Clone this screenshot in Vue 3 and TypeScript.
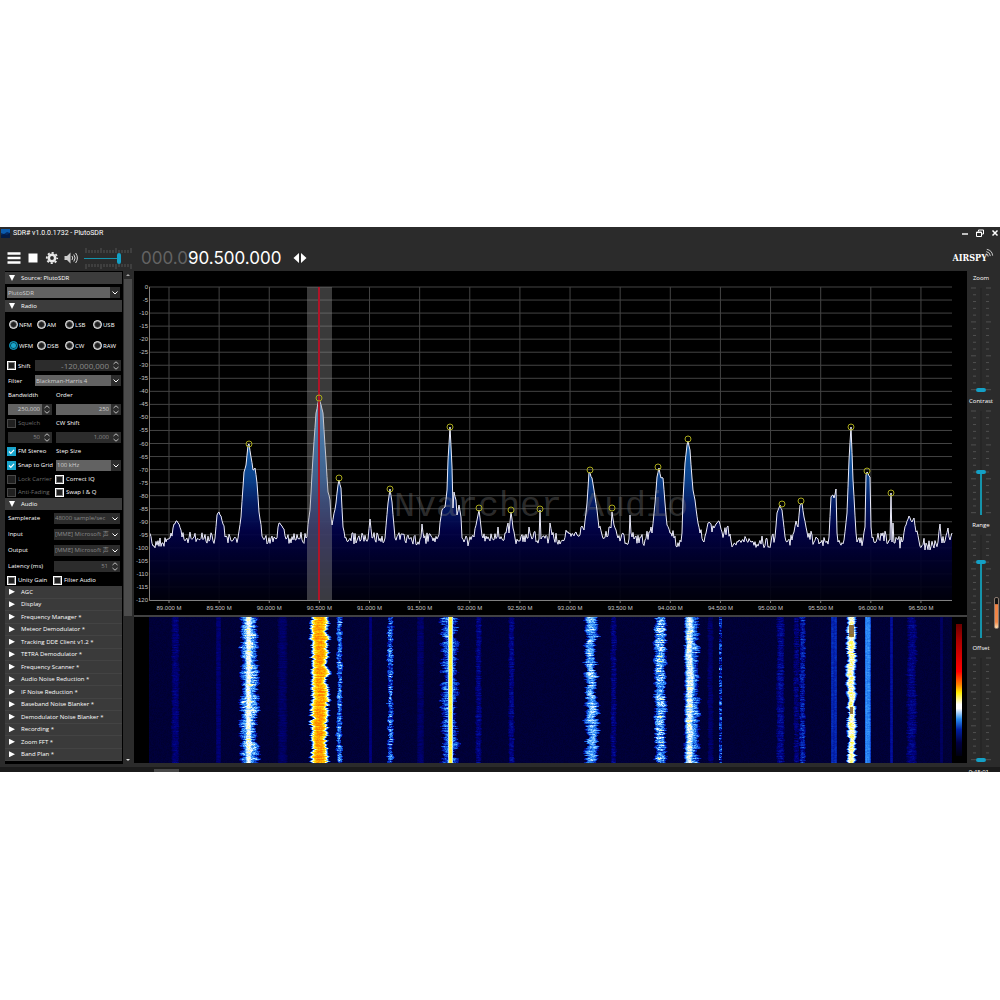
<script setup lang="ts">
import { onMounted, ref } from 'vue'

type Point = [number, number]

const modes = ['NFM', 'AM', 'LSB', 'USB', 'WFM', 'DSB', 'CW', 'RAW']
const mode = ref('WFM')

const plugins = [
  'AGC',
  'Display',
  'Frequency Manager *',
  'Meteor Demodulator *',
  'Tracking DDE Client v1.2 *',
  'TETRA Demodulator *',
  'Frequency Scanner *',
  'Audio Noise Reduction *',
  'IF Noise Reduction *',
  'Baseband Noise Blanker *',
  'Demodulator Noise Blanker *',
  'Recording *',
  'Zoom FFT *',
  'Band Plan *',
]

const sliders = ref([
  { name: 'Zoom', value: 0 },
  { name: 'Contrast', value: 40 },
  { name: 'Range', value: 73 },
  { name: 'Offset', value: 0 },
])
const volume = ref(76)

/* Small deterministic generator, so that the noise is stable between renders. */
function makeRandom(seed: number) {
  let s = seed
  return () => {
    s = (s * 1664525 + 1013904223) % 4294967296
    return s / 4294967296
  }
}

/* ---- spectrum ---- */
const plot = { left: 15, right: 818, top: 16, bottom: 329 }
const dbLines = Array.from({ length: 25 }, (_, i) => ({
  label: String(-5 * i),
  y: plot.top + ((plot.bottom - plot.top) * i) / 24,
}))
const freqLines = Array.from({ length: 16 }, (_, i) => ({
  label: (89 + i / 2).toFixed(3) + ' M',
  x: 35 + i * 50.13,
}))

const envelope: Point[] = [
  [15, 262], [19, 275], [29, 272], [36, 267], [40, 253], [43, 250], [45, 253], [48, 266], [81, 267], [83, 244],
  [85, 241], [87, 245], [89, 253], [91, 266], [104, 267], [107, 246], [110, 201], [112, 194], [114, 174], [115, 173],
  [117, 186], [119, 199], [121, 197], [123, 212], [125, 241], [129, 267], [143, 267], [145, 252], [148, 255],
  [150, 258], [153, 267], [172, 267], [176, 239], [179, 186], [182, 142], [185, 127], [189, 142], [192, 189],
  [194, 221], [196, 229], [197, 246], [198, 254], [202, 232], [204, 214], [205, 209], [207, 217], [209, 256],
  [211, 267], [234, 268], [236, 248], [238, 267], [251, 267], [254, 232], [256, 218], [258, 231], [261, 267],
  [286, 268], [288, 253], [290, 267], [304, 266], [308, 239], [311, 236], [313, 219], [314, 189], [316, 156],
  [318, 196], [319, 237], [320, 221], [322, 229], [323, 244], [325, 234], [327, 246], [328, 267], [335, 270],
  [340, 266], [343, 249], [345, 239], [347, 256], [349, 267], [363, 266], [364, 256], [365, 266], [372, 262],
  [374, 252], [375, 262], [377, 241], [379, 257], [381, 267], [394, 267], [395, 256], [397, 265], [405, 268],
  [406, 239], [407, 268], [415, 267], [416, 252], [418, 264], [425, 269], [436, 262], [443, 264], [448, 255],
  [450, 259], [453, 232], [455, 201], [458, 207], [460, 219], [463, 239], [465, 257], [468, 264], [473, 266],
  [475, 256], [477, 257], [478, 241], [480, 254], [482, 259], [484, 267], [495, 268], [496, 244], [497, 262],
  [500, 268], [511, 269], [515, 261], [518, 262], [521, 232], [523, 206], [525, 197], [527, 207], [529, 207],
  [531, 232], [533, 254], [537, 262], [540, 267], [543, 276], [548, 262], [549, 229], [551, 192], [553, 174],
  [554, 170], [556, 179], [558, 207], [559, 219], [561, 229], [564, 252], [566, 262], [569, 270], [572, 262],
  [574, 252], [577, 253], [578, 261], [580, 257], [583, 252], [585, 250], [588, 261], [590, 262], [594, 255],
  [597, 270], [637, 271], [641, 266], [643, 242], [646, 234], [648, 239], [651, 266], [653, 271], [658, 269],
  [660, 261], [662, 250], [664, 256], [666, 234], [668, 232], [670, 246], [673, 261], [678, 264], [680, 271],
  [693, 270], [695, 266], [697, 226], [699, 224], [700, 227], [702, 218], [703, 262], [704, 271], [710, 269],
  [713, 242], [715, 189], [717, 156], [719, 209], [722, 262], [723, 271], [729, 269], [731, 256], [732, 204],
  [733, 201], [736, 206], [737, 256], [739, 266], [752, 264], [754, 272], [756, 269], [757, 222], [758, 271],
  [759, 252], [760, 272], [768, 271], [772, 254], [775, 245], [778, 251], [780, 247], [782, 261], [785, 270],
  [793, 274], [804, 271], [806, 253], [808, 272], [811, 270], [814, 257], [815, 266], [818, 262],
]

function buildTrace(): string {
  const random = makeRandom(77)
  const pts: string[] = []
  for (let i = 0; i < envelope.length - 1; i++) {
    const [x0, y0] = envelope[i]
    const [x1, y1] = envelope[i + 1]
    pts.push(`${x0} ${y0}`)
    for (let x = x0 + 1; x < x1; x++) {
      const y = y0 + ((y1 - y0) * (x - x0)) / (x1 - x0)
      const spread = y > 258 ? 12 : 2
      pts.push(`${x} ${(y + (random() - 0.5) * spread).toFixed(1)}`)
    }
  }
  pts.push('818 262')
  return pts.join(' L')
}
const trace = 'M' + buildTrace()
const area = `${trace} L818 ${plot.bottom} L15 ${plot.bottom} Z`

const peaks: Point[] = [
  [115, 173], [185, 127], [205, 207], [256, 218], [316, 156], [345, 237], [377, 239], [406, 238], [456, 199],
  [478, 237], [524, 196], [554, 168], [648, 233], [667, 230], [717, 156], [733, 200], [757, 222],
]

/* ---- waterfall ---- */
interface Signal {
  x: number
  half: number
  level: number
  wobble: number
  speckle: number
}
const signals: Signal[] = [
  { x: 26, half: 4, level: 0.13, wobble: 1, speckle: 0.08 },
  { x: 69, half: 3, level: 0.12, wobble: 0, speckle: 0.05 },
  { x: 99, half: 4, level: 0.68, wobble: 1, speckle: 0.1 },
  { x: 100, half: 9, level: 0.54, wobble: 4, speckle: 0.3 },
  { x: 133, half: 5, level: 0.1, wobble: 1, speckle: 0.05 },
  { x: 170, half: 9, level: 1.02, wobble: 4, speckle: 0.16 },
  { x: 190, half: 3, level: 0.42, wobble: 2, speckle: 0.3 },
  { x: 221, half: 2, level: 0.14, wobble: 0, speckle: 0.03 },
  { x: 241, half: 3, level: 0.38, wobble: 2, speckle: 0.35 },
  { x: 271, half: 4, level: 0.1, wobble: 0, speckle: 0.05 },
  { x: 301, half: 3, level: 0.82, wobble: 0, speckle: 0.04 },
  { x: 300, half: 8, level: 0.38, wobble: 5, speckle: 0.28 },
  { x: 329, half: 3, level: 0.15, wobble: 1, speckle: 0.1 },
  { x: 362, half: 3, level: 0.16, wobble: 1, speckle: 0.1 },
  { x: 442, half: 6, level: 0.52, wobble: 5, speckle: 0.22 },
  { x: 464, half: 3, level: 0.14, wobble: 1, speckle: 0.1 },
  { x: 511, half: 6, level: 0.52, wobble: 3, speckle: 0.32 },
  { x: 540, half: 5, level: 0.66, wobble: 2, speckle: 0.14 },
  { x: 543, half: 7, level: 0.44, wobble: 4, speckle: 0.28 },
  { x: 561, half: 3, level: 0.1, wobble: 1, speckle: 0.06 },
  { x: 571, half: 2, level: 0.26, wobble: 0, speckle: 0.4 },
  { x: 631, half: 4, level: 0.17, wobble: 1, speckle: 0.12 },
  { x: 647, half: 3, level: 0.13, wobble: 1, speckle: 0.12 },
  { x: 653, half: 3, level: 0.24, wobble: 1, speckle: 0.2 },
  { x: 683, half: 2, level: 0.28, wobble: 0, speckle: 0.05 },
  { x: 686, half: 2, level: 0.28, wobble: 0, speckle: 0.05 },
  { x: 702, half: 5, level: 0.74, wobble: 3, speckle: 0.12 },
  { x: 717, half: 2, level: 0.46, wobble: 0, speckle: 0.04 },
  { x: 719, half: 3, level: 0.45, wobble: 0, speckle: 0.06 },
  { x: 742, half: 2, level: 0.2, wobble: 0, speckle: 0.03 },
  { x: 762, half: 5, level: 0.15, wobble: 2, speckle: 0.1 },
  { x: 792, half: 2, level: 0.09, wobble: 0, speckle: 0.02 },
]
const palette: [number, number[]][] = [
  [0, [0, 0, 48]],
  [0.15, [0, 0, 130]],
  [0.3, [6, 50, 190]],
  [0.45, [40, 135, 245]],
  [0.58, [140, 205, 255]],
  [0.68, [255, 255, 255]],
  [0.8, [255, 250, 70]],
  [0.92, [255, 205, 0]],
  [1.05, [255, 140, 0]],
  [1.3, [250, 60, 0]],
]

function colourOf(v: number): number[] {
  for (let i = 1; i < palette.length; i++) {
    const [p1, c1] = palette[i]
    if (v <= p1) {
      const [p0, c0] = palette[i - 1]
      const t = Math.max(0, (v - p0) / (p1 - p0))
      return c0.map((c, k) => c + (c1[k] - c) * t)
    }
  }
  return palette[palette.length - 1][1]
}

const waterfall = ref<HTMLCanvasElement | null>(null)

onMounted(() => {
  const canvas = waterfall.value
  const ctx = canvas?.getContext('2d')
  if (!canvas || !ctx) return
  const { width, height } = canvas
  const image = ctx.createImageData(width, height)
  const random = makeRandom(4242)
  const values = new Float32Array(width * height)
  for (let i = 0; i < values.length; i++) values[i] = random() * 0.025

  for (const s of signals) {
    let drift = 0
    let spread = 0
    for (let y = 0; y < height; y++) {
      drift = drift * 0.8 + (random() - 0.5) * s.wobble * 0.4
      spread = spread * 0.5 + (random() - 0.5) * s.wobble * 0.8
      const reach = s.half + spread
      const rowGain = (random() - 0.5) * s.speckle * 0.7
      let grain = 0
      for (let x = s.x - s.half - 3; x <= s.x + s.half + 3; x++) {
        grain = grain * 0.5 + (random() - 0.5) * s.speckle * 0.8
        const d = Math.abs(x - s.x - drift) / reach
        if (d >= 1 || x < 0 || x >= width) continue
        const shape = 1 - d * d * d * 0.85
        const v = s.level * shape + rowGain + grain
        const at = y * width + x
        values[at] = Math.max(values[at], v)
      }
    }
  }

  for (let i = 0; i < values.length; i++) {
    const [r, g, b] = colourOf(values[i])
    image.data[i * 4] = r
    image.data[i * 4 + 1] = g
    image.data[i * 4 + 2] = b
    image.data[i * 4 + 3] = 255
  }
  ctx.putImageData(image, 0, 0)
  ctx.fillStyle = 'rgba(110, 70, 20, 0.75)'
  ctx.fillRect(700, 8, 5, 12)
  ctx.fillRect(701, 90, 3, 7)
})

const sideTicks = Array.from({ length: 16 }, (_, i) => ({ y: 2 + i * 6.78, long: i % 5 === 0 }))
const volumeTicks = Array.from({ length: 16 }, (_, i) => ({ x: 2 + i * 3, long: i % 5 === 0 }))
</script>

<template>
  <main class="page">
    <div class="window">
      <header class="titlebar">
        <svg class="app-icon" viewBox="0 0 9 9" aria-hidden="true">
          <rect width="9" height="9" fill="#052a63" />
          <path d="M0 0h9v4l-3-1-3 2-3-1z" fill="#0b5cae" />
          <path d="M0 6l3-1 3 1 3-2v5H0z" fill="#031b45" />
        </svg>
        <span class="title">SDR# v1.0.0.1732 - PlutoSDR</span>
        <button class="win-btn" aria-label="Minimize">
          <svg viewBox="0 0 8 8"><path d="M1 5h6" stroke="#fff" stroke-width="1.4" /></svg>
        </button>
        <button class="win-btn" aria-label="Restore">
          <svg viewBox="0 0 8 8" fill="none" stroke="#fff">
            <path d="M2.5 2.5v-1.500h5v4h-1.500" />
            <path d="M.5 3h5v4.500h-5z" /><path d="M.5 3.500h5" />
          </svg>
        </button>
        <button class="win-btn" aria-label="Close">
          <svg viewBox="0 0 8 8"><path d="M1.500 1.500l5 5M6.500 1.500l-5 5" stroke="#fff" stroke-width="1.500" /></svg>
        </button>
      </header>

      <div class="toolbar">
        <button class="tool" aria-label="Menu">
          <svg viewBox="0 0 14 14"><path d="M.5 2.500h13M.5 7h13M.5 11.500h13" stroke="#fff" stroke-width="2.500" /></svg>
        </button>
        <button class="tool" aria-label="Stop">
          <svg viewBox="0 0 14 14"><path d="M2.500 2.500h9v9h-9z" fill="#fff" /></svg>
        </button>
        <button class="tool" aria-label="Settings">
          <svg viewBox="0 0 14 14">
            <circle cx="7" cy="7" r="3.200" fill="none" stroke="#e8e8e8" stroke-width="2.600" />
            <circle cx="7" cy="7" r="5.200" fill="none" stroke="#e8e8e8" stroke-width="1.800" stroke-dasharray="2.100 1.984" stroke-dashoffset="1" />
          </svg>
        </button>
        <button class="tool" aria-label="Mute">
          <svg viewBox="0 0 14 14" fill="none" stroke="#ddd">
            <path d="M.5 5h2.500l3.500-3.500v11l-3.500-3.500h-2.500z" fill="#ccc" stroke="none" />
            <path d="M8 5q1.500 2 0 4M9.800 3.500q2.600 3.500 0 7M11.600 2q3.600 5 0 10" />
          </svg>
        </button>
        <div class="volume">
          <svg viewBox="0 0 50 21" aria-hidden="true">
            <g stroke="#555" stroke-width="1">
              <template v-for="t in volumeTicks" :key="t.x">
                <path :d="t.long ? `M${t.x} 0v5` : `M${t.x} 2v3`" />
                <path :d="t.long ? `M${t.x} 16v5` : `M${t.x} 16v3`" />
              </template>
            </g>
          </svg>
          <input v-model="volume" type="range" min="0" max="100" aria-label="Volume" :style="{ '--fill': volume + '%' }" />
        </div>
        <output class="frequency" aria-label="Frequency"><span>000.0</span>90.500.000</output>
        <button class="tool step" aria-label="Tuning style">
          <svg viewBox="0 0 14 14"><path d="M6 2v10L.5 7zM8 2v10l5.500-5z" fill="#fff" /></svg>
        </button>
        <a class="brand" href="#" aria-label="Airspy">
          <span>AIRSPY</span>
          <svg viewBox="0 0 10 10" fill="none" stroke="#ddd">
            <path d="M1 6.500a3 3 0 0 1 2.500 3M1.500 4a5.500 5.500 0 0 1 4.500 5M2 1.500a8 8 0 0 1 6.500 7" />
          </svg>
        </a>
      </div>

      <div class="body">
        <aside class="panel">
          <h2 class="section"><i class="down"></i>Source: PlutoSDR</h2>
          <div class="source">
            <div class="combo">
              <select aria-label="Source"><option>PlutoSDR</option></select>
              <svg viewBox="0 0 6 4"><path d="M.5.5L3 3 5.500.5" /></svg>
            </div>
          </div>

          <h2 class="section"><i class="down"></i>Radio</h2>
          <div class="modes">
            <label v-for="m in modes" :key="m"><input v-model="mode" type="radio" name="mode" :value="m" />{{ m }}</label>
          </div>
          <div class="row head">
            <label><input type="checkbox" />Shift</label>
            <div class="spin off big">
              <input type="text" value="-120,000,000" aria-label="Shift frequency" />
              <svg viewBox="0 0 6 9"><path d="M.5 3L3 .8 5.500 3M.5 6L3 8.200 5.500 6" /></svg>
            </div>
          </div>
          <div class="row head">
            <label for="filter">Filter</label>
            <div class="combo">
              <select id="filter"><option>Blackman-Harris 4</option></select>
              <svg viewBox="0 0 6 4"><path d="M.5.5L3 3 5.500.5" /></svg>
            </div>
          </div>
          <div class="row"><label for="bw">Bandwidth</label><label for="order">Order</label></div>
          <div class="row">
            <div class="spin">
              <input id="bw" type="text" value="250,000" />
              <svg viewBox="0 0 6 9"><path d="M.5 3L3 .8 5.500 3M.5 6L3 8.200 5.500 6" /></svg>
            </div>
            <div class="spin">
              <input id="order" type="text" value="250" />
              <svg viewBox="0 0 6 9"><path d="M.5 3L3 .8 5.500 3M.5 6L3 8.200 5.500 6" /></svg>
            </div>
          </div>
          <div class="row">
            <label class="dim"><input type="checkbox" disabled />Squelch</label><label for="cw">CW Shift</label>
          </div>
          <div class="row">
            <div class="spin off">
              <input type="text" value="50" aria-label="Squelch level" />
              <svg viewBox="0 0 6 9"><path d="M.5 3L3 .8 5.500 3M.5 6L3 8.200 5.500 6" /></svg>
            </div>
            <div class="spin off">
              <input id="cw" type="text" value="1,000" />
              <svg viewBox="0 0 6 9"><path d="M.5 3L3 .8 5.500 3M.5 6L3 8.200 5.500 6" /></svg>
            </div>
          </div>
          <div class="row">
            <label><input type="checkbox" checked />FM Stereo</label><label for="stepsize">Step Size</label>
          </div>
          <div class="row">
            <label><input type="checkbox" checked />Snap to Grid</label>
            <div class="combo">
              <select id="stepsize"><option>100 kHz</option></select>
              <svg viewBox="0 0 6 4"><path d="M.5.5L3 3 5.500.5" /></svg>
            </div>
          </div>
          <div class="row">
            <label class="dim"><input type="checkbox" disabled />Lock Carrier</label>
            <label><input type="checkbox" />Correct IQ</label>
          </div>
          <div class="row tight">
            <label class="dim"><input type="checkbox" disabled />Anti-Fading</label>
            <label><input type="checkbox" />Swap I &amp; Q</label>
          </div>

          <h2 class="section"><i class="down"></i>Audio</h2>
          <div class="row audio">
            <label for="rate">Samplerate</label>
            <div class="combo off">
              <select id="rate"><option>48000 sample/sec</option></select>
              <svg viewBox="0 0 6 4"><path d="M.5.5L3 3 5.500.5" /></svg>
            </div>
          </div>
          <div class="row audio">
            <label for="in">Input</label>
            <div class="combo off">
              <select id="in"><option>[MME] Microsoft 声</option></select>
              <svg viewBox="0 0 6 4"><path d="M.5.5L3 3 5.500.5" /></svg>
            </div>
          </div>
          <div class="row audio">
            <label for="out">Output</label>
            <div class="combo off">
              <select id="out"><option>[MME] Microsoft 声</option></select>
              <svg viewBox="0 0 6 4"><path d="M.5.5L3 3 5.500.5" /></svg>
            </div>
          </div>
          <div class="row audio">
            <label for="latency">Latency (ms)</label>
            <div class="spin off">
              <input id="latency" type="text" value="51" />
              <svg viewBox="0 0 6 9"><path d="M.5 3L3 .8 5.500 3M.5 6L3 8.200 5.500 6" /></svg>
            </div>
          </div>
          <div class="row tight unity">
            <label><input type="checkbox" />Unity Gain</label>
            <label><input type="checkbox" />Filter Audio</label>
          </div>

          <ul class="plugins">
            <li v-for="p in plugins" :key="p"><i class="right"></i>{{ p }}</li>
          </ul>
        </aside>

        <div class="scrollbar" aria-hidden="true">
          <svg viewBox="0 0 8 8"><path d="M2 5l2-2 2 2z" fill="#aaa" /></svg>
          <div class="thumb"></div>
          <div class="rest"></div>
          <svg viewBox="0 0 8 8"><path d="M2 3l2 2 2-2z" fill="#ddd" /></svg>
        </div>

        <section class="display">
          <svg class="spectrum" viewBox="0 0 833 344" role="img" aria-label="Spectrum">
            <defs>
              <linearGradient id="signal" gradientUnits="userSpaceOnUse" x1="0" y1="126" x2="0" y2="329">
                <stop offset="0" stop-color="#5a9fe0" />
                <stop offset="0.22" stop-color="#1566b8" />
                <stop offset="0.4" stop-color="#0a4594" />
                <stop offset="0.52" stop-color="#041f6c" />
                <stop offset="0.66" stop-color="#010148" />
                <stop offset="0.8" stop-color="#00002c" />
                <stop offset="1" stop-color="#00000c" />
              </linearGradient>
            </defs>
            <g stroke="#444" stroke-width="1">
              <path v-for="l in dbLines" :key="l.label" :d="`M15 ${l.y}H818`" />
              <path v-for="l in freqLines" :key="l.label" :d="`M${l.x} 16V329`" />
            </g>
            <path :d="area" fill="url(#signal)" fill-opacity="0.92" />
            <text class="watermark" x="260" y="245">Nvarcher Audio</text>
            <path :d="trace" fill="none" stroke="#ececfa" stroke-width="1" stroke-linejoin="round" />
            <rect x="173" y="16" width="25" height="313" fill="#909090" fill-opacity="0.4" />
            <rect class="tuned" x="184" y="16" width="2" height="313" />
            <path d="M15.500 16V329.500H818" fill="none" stroke="#808080" />
            <path v-for="l in freqLines" :key="l.label" :d="`M${l.x} 329v3`" stroke="#808080" />
            <g fill="none" stroke="#a8a81c" stroke-width="1">
              <circle v-for="(p, i) in peaks" :key="i" :cx="p[0]" :cy="p[1]" r="3" />
            </g>
            <g class="axis">
              <text v-for="l in dbLines" :key="l.label" x="14" :y="l.y + 2" text-anchor="end">{{ l.label }}</text>
              <text v-for="l in freqLines" :key="l.label" :x="l.x" y="339" text-anchor="middle">{{ l.label }}</text>
            </g>
          </svg>
          <div class="falls">
            <canvas ref="waterfall" width="803" height="146" aria-label="Waterfall"></canvas>
            <div class="legend"></div>
          </div>
        </section>

        <aside class="levels">
          <div v-for="s in sliders" :key="s.name" class="level">
            <label :for="s.name">{{ s.name }}</label>
            <div class="fader">
              <svg viewBox="0 0 20 106" aria-hidden="true">
                <g stroke="#505050" stroke-width="1">
                  <path v-for="t in sideTicks" :key="t.y" :d="t.long ? `M0 ${t.y}h5m10 0h5` : `M2 ${t.y}h3m10 0h3`" />
                </g>
                <path d="M10 2v102" stroke="#222" />
              </svg>
              <input :id="s.name" v-model="s.value" type="range" min="0" max="100" :style="{ '--fill': s.value + '%' }" />
            </div>
          </div>
          <div class="meter"></div>
        </aside>
      </div>

      <footer class="bottom">
        <div class="handle"></div>
        <time>9:45:01</time>
      </footer>
    </div>
  </main>
</template>

<style>
body {
  margin: 0;
  background: #fff;
}
</style>

<style scoped>
* {
  box-sizing: border-box;
}
.page {
  padding: 227px 0;
  font: 6px/8px 'Open Sans', 'Noto Sans CJK SC', sans-serif;
  color: #fff;
}
button {
  padding: 0;
  border: 0;
  background: none;
}
svg {
  display: block;
}
.window {
  background: #2b2b2b;
}
.titlebar {
  display: flex;
  align-items: center;
  height: 12px;
  padding-left: 1px;
}
.app-icon {
  width: 9px;
  height: 9px;
}
.title {
  flex: 1;
  margin-left: 3px;
  font-family: Roboto, sans-serif;
  font-size: 7px;
}
.win-btn {
  width: 8px;
  height: 8px;
  margin-left: 7px;
}
.win-btn:last-child {
  margin-right: 1px;
}
.toolbar {
  display: flex;
  align-items: center;
  height: 32px;
  padding: 6px 6px 0 7px;
}
.tool {
  width: 15px;
  height: 15px;
  margin-right: 4px;
}
.tool svg {
  width: 14px;
  height: 14px;
}
.volume {
  display: grid;
  width: 50px;
  margin-left: 1px;
}
.volume > * {
  grid-area: 1 / 1;
}
.volume svg {
  width: 50px;
  height: 21px;
}
input[type='range'] {
  appearance: none;
  margin: 0;
  background: none;
}
.volume input {
  width: 48px;
  height: 21px;
  background: linear-gradient(#1593ab, #1593ab) 0 10px / var(--fill) 1px no-repeat;
}
.volume input::-webkit-slider-thumb {
  appearance: none;
  width: 4px;
  height: 11px;
  border-radius: 2px;
  background: #14a0c6;
}
.frequency {
  margin: 0 12px 0 7px;
  font: 17px/20px Inter, sans-serif;
  color: #fff;
}
.frequency span {
  color: #636363;
}
.brand {
  display: flex;
  margin-left: auto;
  font: bold 9px/13px 'DejaVu Serif Condensed', 'DejaVu Serif', serif;
  color: #fff;
  text-decoration: none;
}
.brand svg {
  width: 9px;
  height: 9px;
  margin: -4px 0 0 -2px;
}
.body {
  display: flex;
  height: 493px;
  padding-left: 5px;
}
.panel {
  width: 118px;
  padding: 1px 1px 0 0;
  background: #000;
}
.section {
  display: flex;
  align-items: center;
  height: 12px;
  margin: 0;
  background: #3c3c3c;
  font-size: 6px;
  font-weight: 500;
}
.down,
.right {
  width: 6px;
  height: 6px;
  margin: 0 6px 0 4px;
  background: #fff;
  clip-path: polygon(0 0, 100% 0, 50% 100%);
}
.right {
  clip-path: polygon(0 0, 100% 50%, 0 100%);
}
.source {
  padding: 3px 2px 2px;
}
.combo,
.spin {
  position: relative;
  display: flex;
  height: 11px;
  background: #2c2c2c;
}
.combo select,
.spin input {
  appearance: none;
  flex: 1;
  width: 0;
  height: 11px;
  margin-right: 10px;
  padding: 0 1px;
  border: 0;
  border-radius: 0;
  background: #626262;
  color: #d0d0d0;
  font: inherit;
}
.spin input {
  padding-right: 2px;
  text-align: right;
}
.off select,
.off input {
  background: #2c2c2c;
  color: #8a8a8a;
}
.big input {
  font-size: 8px;
}
.combo svg,
.spin svg {
  position: absolute;
  top: 4px;
  right: 2px;
  width: 6px;
  height: 4px;
  fill: none;
  stroke: #fff;
}
.spin svg {
  top: 1px;
  height: 9px;
  stroke: #bbb;
}
.modes {
  display: grid;
  grid-template-columns: repeat(4, 28px);
  grid-auto-rows: 21px;
  padding: 2px 0 2px 3px;
}
label {
  display: flex;
  align-items: center;
  white-space: nowrap;
}
input[type='radio'],
input[type='checkbox'] {
  appearance: none;
  flex: none;
  width: 9px;
  height: 9px;
  margin: 0 2px 0 -1px;
  border: 1px solid #fff;
  background: #202020;
  box-shadow: inset 0 0 0 1px #777;
}
input[type='radio'] {
  margin: 0 1px 0 1px;
  border-radius: 5px;
}
input[type='radio']:checked {
  border-color: #0e8fb4;
  background: #1aa6cc;
  box-shadow: inset 0 0 0 1px #0a4658;
}
input[type='checkbox']:checked {
  border-color: #18a3cb;
  background: #18a3cb url("data:image/svg+xml,%3Csvg xmlns='http://www.w3.org/2000/svg' viewBox='0 0 7 7'%3E%3Cpath d='M1 3.500L2.800 5.300 6 1.800' fill='none' stroke='%23fff' stroke-width='1.200'/%3E%3C/svg%3E") center / 7px 7px no-repeat;
  box-shadow: none;
}
input[type='checkbox']:disabled {
  border-color: #484848;
  box-shadow: none;
}
.dim {
  color: #6c6c6c;
}
.row {
  display: grid;
  grid-template-columns: 44px 1fr;
  gap: 4px;
  align-items: center;
  height: 14px;
  padding: 0 1px 0 3px;
}
.head {
  grid-template-columns: 23px 1fr;
  height: 15px;
}
.tight {
  height: 12px;
}
.unity {
  grid-template-columns: 42px 1fr;
}
.audio {
  grid-template-columns: 42px 1fr;
  height: 16px;
  padding-right: 2px;
}
.plugins {
  display: grid;
  grid-auto-rows: 1fr;
  height: 175px;
  margin: 0;
  padding: 0;
  list-style: none;
  background: #3a3a3a;
}
.plugins li {
  display: flex;
  align-items: center;
  border-bottom: 1px solid #434343;
}
.scrollbar {
  display: flex;
  flex-direction: column;
  width: 9px;
  margin-right: 2px;
  padding-left: 1px;
}
.scrollbar svg {
  width: 8px;
  height: 8px;
}
.thumb {
  flex: 337;
  background: #4c4c4c;
}
.rest {
  flex: 140;
}
.display {
  flex: 1;
  min-width: 0;
  background: #000;
  border-bottom: 1px solid #2b2b2b;
  overflow: hidden;
}
.spectrum {
  width: 100%;
  height: auto;
}
.watermark {
  font: 35px 'Liberation Mono', monospace;
  fill: #707070;
  fill-opacity: 0.4;
}
.tuned {
  fill: #b01428;
}
.axis {
  font: 6px 'Liberation Sans', sans-serif;
  fill: #c4c4c4;
}
.falls {
  display: flex;
  border-top: 2px solid #424242;
  padding-left: 15px;
}
.falls canvas {
  flex: 1;
  min-width: 0;
}
.legend {
  width: 6px;
  margin: 7px 5px 7px 4px;
  background: linear-gradient(#6a0000, #a80000 12%, #f00 36%, #ff8000 46%, #ffee00 52%, #fff 61%, #fff 64%, #2a8cf0 72%, #0020a0 80%, #000040 90%, #000010);
}
.levels {
  position: relative;
  display: flex;
  flex-direction: column;
  width: 33px;
}
.level {
  display: flex;
  flex: 1;
  flex-direction: column;
  align-items: center;
  padding-right: 5px;
}
.level label {
  height: 14px;
}
.fader {
  display: grid;
  justify-items: center;
  margin-top: 1px;
}
.fader > * {
  grid-area: 1 / 1;
}
.fader svg {
  width: 20px;
  height: 106px;
}
.fader input {
  writing-mode: vertical-lr;
  direction: rtl;
  width: 10px;
  height: 106px;
  background: linear-gradient(#1593ab, #1593ab) 4px 100% / 2px var(--fill) no-repeat;
}
.fader input::-webkit-slider-thumb {
  appearance: none;
  width: 10px;
  height: 4px;
  border-radius: 2px;
  background: #14a0c6;
}
.meter {
  position: absolute;
  right: 1px;
  top: 326px;
  width: 5px;
  height: 32px;
  border: 1px solid #8a7a70;
  border-radius: 2px;
  background: linear-gradient(#111 20%, #f08040 22%, #f08a4c 80%, #ffe0b0);
}
.bottom {
  display: flex;
  justify-content: space-between;
  height: 8px;
  padding: 0 11px 0 154px;
  border-top: 3px solid #2b2b2b;
  background: #1b1b1b;
  overflow: hidden;
}
.handle {
  width: 25px;
  margin-top: 2px;
  background: #484848;
}
.bottom time {
  margin-top: 1px;
}
</style>
